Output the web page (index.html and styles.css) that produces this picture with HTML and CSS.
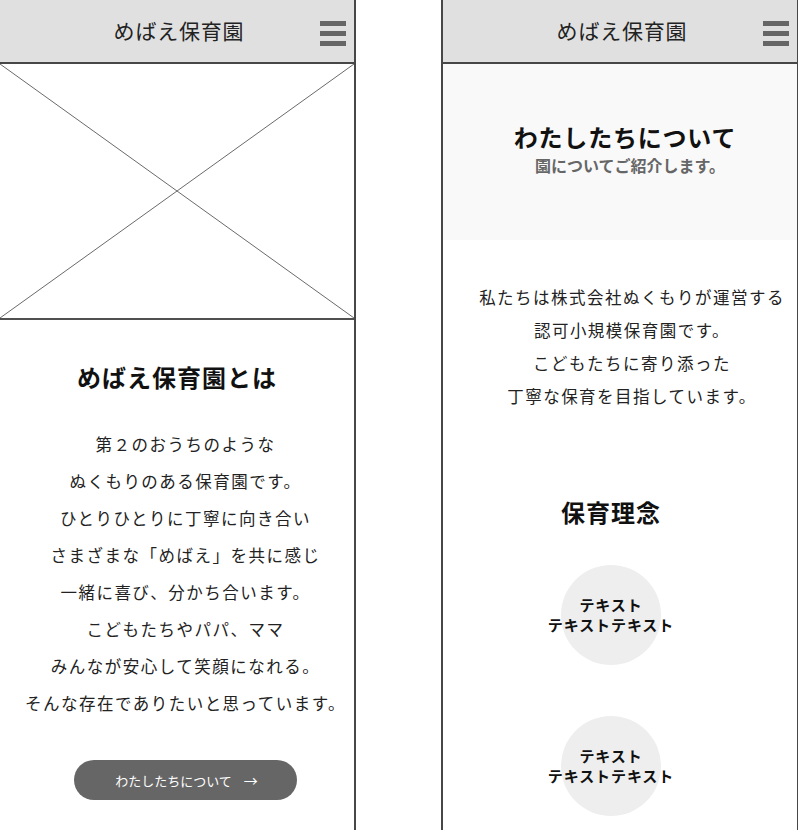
FILE: index.html
```html
<!DOCTYPE html>
<html lang="ja">
<head>
<meta charset="utf-8">
<title>めばえ保育園</title>
<link rel="stylesheet" href="styles.css">
</head>
<body>
<div class="canvas">
  <section class="frame">
    <header class="site-header">
      <span></span>
      <h1 class="site-title">めばえ保育園</h1>
      <span class="hamburger"><i></i><i></i><i></i></span>
    </header>
    <div class="placeholder">
      <svg viewBox="0 0 354 254" preserveAspectRatio="none" width="354" height="254">
        <line x1="0" y1="0" x2="354" y2="254" stroke="#6a6a6a" stroke-width="1"/>
        <line x1="354" y1="0" x2="0" y2="254" stroke="#6a6a6a" stroke-width="1"/>
      </svg>
    </div>
    <div class="intro">
      <h2 class="section-title">めばえ保育園とは</h2>
      <div class="intro-body">
        <p class="lead lead-left">第２のおうちのような<br>ぬくもりのある保育園です。<br>ひとりひとりに丁寧に向き合い<br>さまざまな「めばえ」を共に感じ<br>一緒に喜び、分かち合います。<br>こどもたちやパパ、ママ<br>みんなが安心して笑顔になれる。<br>そんな存在でありたいと思っています。</p>
        <a class="btn" href="#">わたしたちについて<span class="arrow">→</span></a>
      </div>
    </div>
  </section>

  <section class="frame">
    <header class="site-header">
      <span></span>
      <h1 class="site-title">めばえ保育園</h1>
      <span class="hamburger"><i></i><i></i><i></i></span>
    </header>
    <div class="hero">
      <h2 class="hero-title">わたしたちについて</h2>
      <p class="hero-sub">園についてご紹介します。</p>
    </div>
    <div class="about">
      <p class="lead lead-right">私たちは株式会社ぬくもりが運営する<br>認可小規模保育園です。<br>こどもたちに寄り添った<br>丁寧な保育を目指しています。</p>
    </div>
    <div class="philosophy">
      <h2 class="section-title">保育理念</h2>
      <ul class="circles">
        <li class="circle">テキスト<br>テキストテキスト</li>
        <li class="circle">テキスト<br>テキストテキスト</li>
      </ul>
    </div>
  </section>
</div>
</body>
</html>
```

FILE: styles.css
```css
* { box-sizing: border-box; }

html, body {
  margin: 0;
  padding: 0;
  width: 798px;
  height: 830px;
  overflow: hidden;
  background: #ffffff;
}

body {
  font-family: "Noto Sans CJK JP", "Noto Sans", sans-serif;
  color: #222222;
}

.canvas {
  display: flex;
  gap: 85px;
  margin-left: -2px;
  align-items: flex-start;
}

.frame {
  flex: 0 0 358px;
  width: 358px;
  min-height: 900px;
  border-left: 2px solid #474747;
  border-right: 2px solid #474747;
  background: #ffffff;
  display: flex;
  flex-direction: column;
}

.site-header {
  height: 64px;
  background: #e0e0e0;
  border-bottom: 2px solid #474747;
  display: grid;
  grid-template-columns: 1fr auto 1fr;
  align-items: start;
}

.site-title {
  margin: 0;
  padding-top: 14px;
  padding-left: 4px;
  font-size: 21px;
  line-height: 32px;
  font-weight: 400;
  color: #222222;
  letter-spacing: 0.8px;
}

.hamburger {
  justify-self: end;
  margin-top: 21px;
  margin-right: 8px;
  width: 26px;
  display: flex;
  flex-direction: column;
  gap: 5px;
}

.hamburger i {
  display: block;
  height: 5px;
  background: #666666;
}

.placeholder {
  height: 256px;
  border-bottom: 2px solid #505050;
}

.placeholder svg {
  display: block;
}

.intro {
  padding-top: 40px;
  text-align: center;
}

.section-title {
  margin: 0;
  font-size: 24px;
  line-height: 34px;
  font-weight: 700;
  color: #111111;
  letter-spacing: 1px;
}

.intro-body {
  padding-left: 17px;
  display: flex;
  flex-direction: column;
  align-items: center;
}

.lead {
  margin: 0;
  font-size: 16.5px;
  letter-spacing: 0.09em;
  color: #222222;
  text-align: center;
}

.lead-left {
  margin-top: 32px;
  line-height: 37px;
}

.btn {
  margin-top: 38px;
  width: 223px;
  height: 40px;
  border-radius: 20px;
  background: #666666;
  color: #ffffff;
  text-decoration: none;
  font-size: 13px;
  display: inline-flex;
  align-items: center;
  justify-content: center;
  gap: 12px;
  padding-left: 2px;
}

.arrow {
  font-size: 14px;
}

.hero {
  height: 176px;
  background: #f9f9f9;
  text-align: center;
  padding-top: 57px;
  padding-left: 10px;
}

.hero-title {
  margin: 0;
  font-size: 24px;
  line-height: 32px;
  font-weight: 700;
  color: #111111;
  letter-spacing: 0.8px;
}

.hero-sub {
  margin: 1px 0 0;
  padding-left: 10px;
  font-size: 16px;
  line-height: 22px;
  font-weight: 700;
  color: #666666;
}

.about {
  padding-top: 41px;
  padding-left: 24px;
}

.lead-right {
  line-height: 33px;
}

.philosophy {
  padding-top: 82px;
  padding-right: 18px;
  text-align: center;
}

.circles {
  list-style: none;
  margin: 36px 0 0;
  padding: 0;
  display: flex;
  flex-direction: column;
  align-items: center;
  gap: 51px;
}

.circle {
  width: 100px;
  height: 100px;
  border-radius: 50%;
  background: #eeeeee;
  display: flex;
  align-items: center;
  justify-content: center;
  white-space: nowrap;
  font-size: 15px;
  line-height: 20px;
  font-weight: 700;
  color: #111111;
  letter-spacing: 0.9px;
}
```
